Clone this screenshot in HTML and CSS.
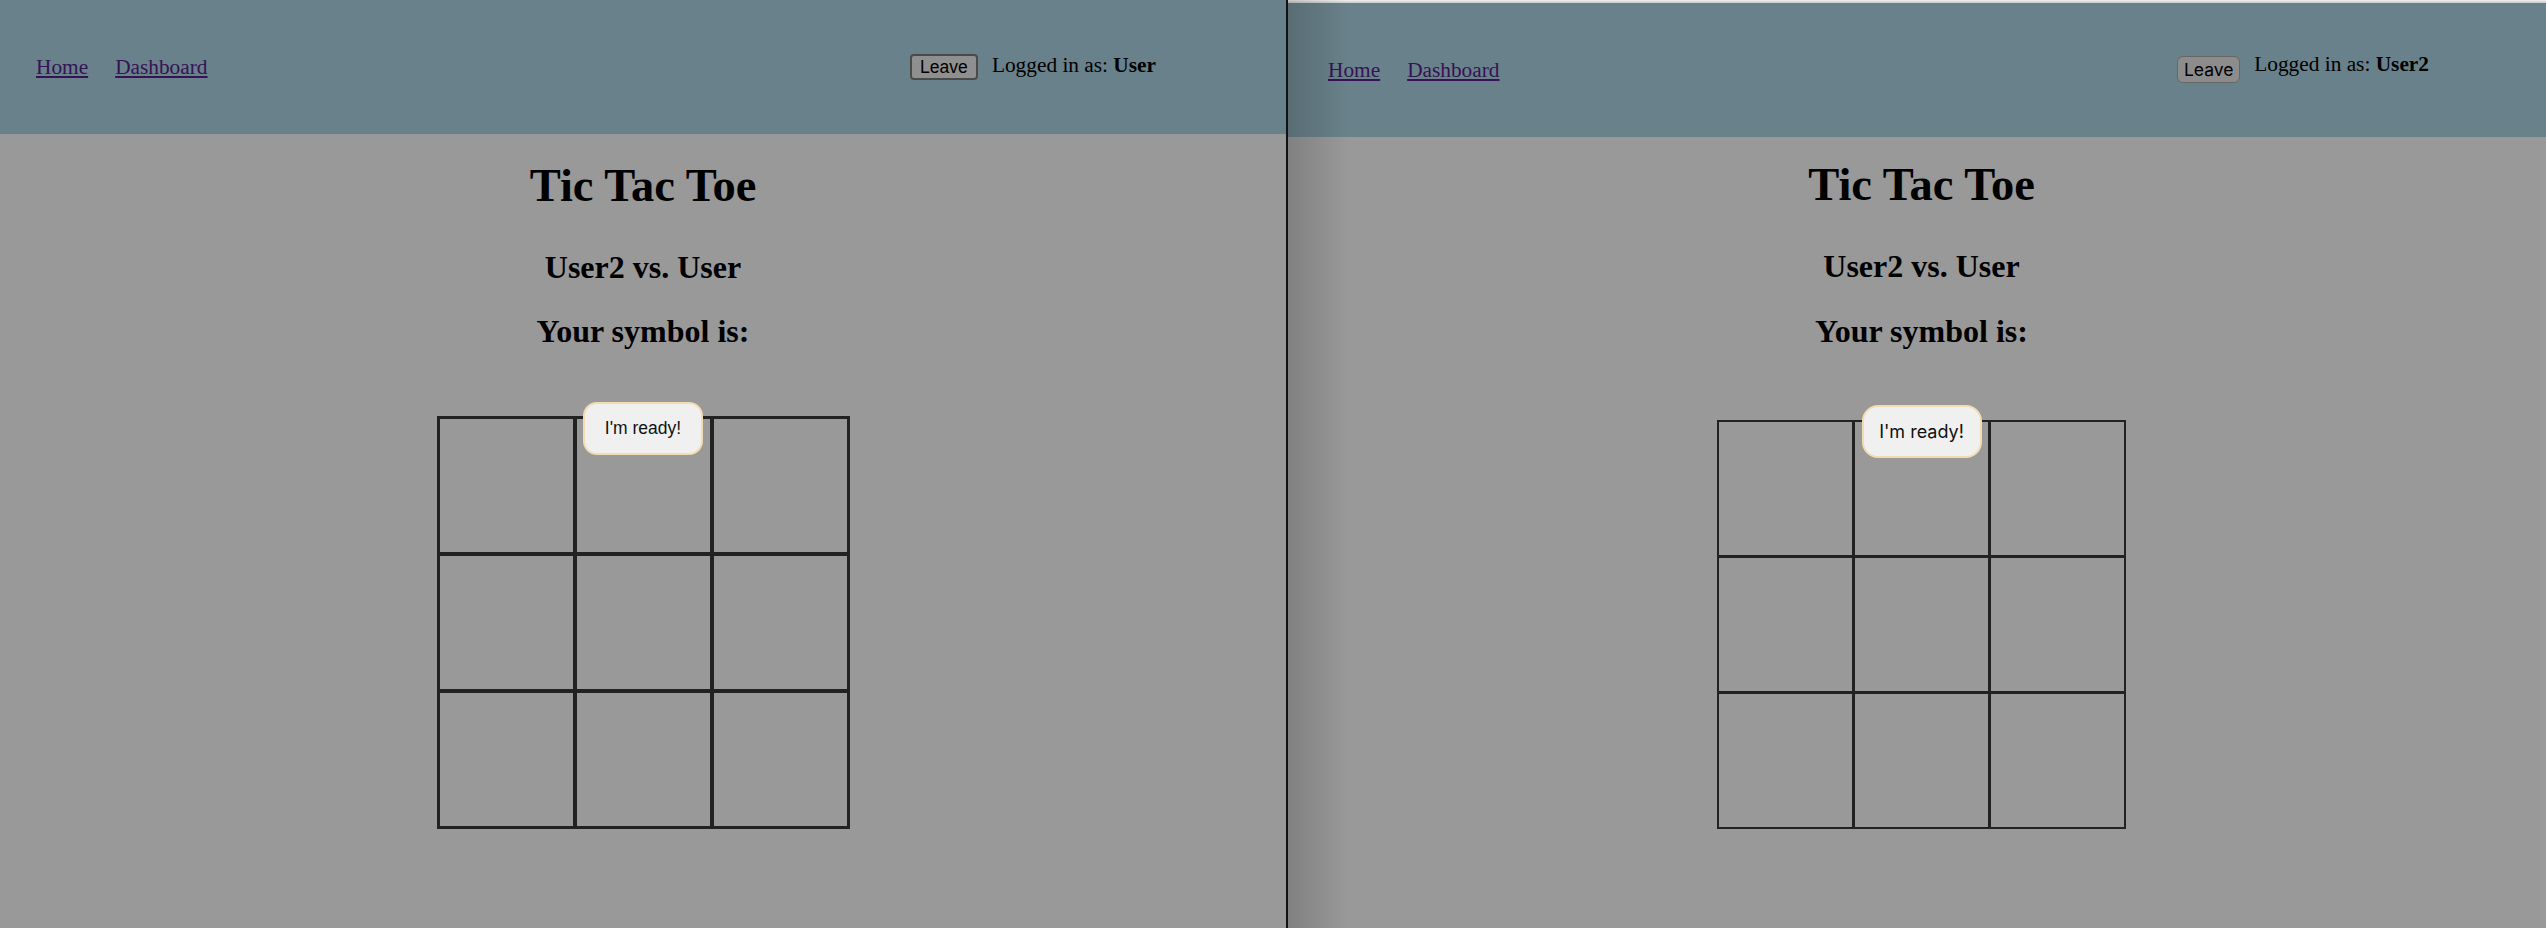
FILE: index.html
```html
<!DOCTYPE html>
<html lang="en">
<head>
<meta charset="utf-8">
<title>Tic Tac Toe</title>
<link rel="stylesheet" href="styles.css">
</head>
<body>
<div class="screen">
  <section class="win win-a">
    <header class="topbar">
      <nav class="nav"><a href="#">Home</a><a href="#">Dashboard</a></nav>
      <div class="user"><button class="leave">Leave</button><span class="who">Logged in as: <b>User</b></span></div>
    </header>
    <main class="game">
      <h1>Tic Tac Toe</h1>
      <h2 class="vs">User2 vs. User</h2>
      <h2 class="symbol">Your symbol is:</h2>
      <div class="board-wrap">
        <div class="board">
          <div class="cell"></div><div class="cell"></div><div class="cell"></div>
          <div class="cell"></div><div class="cell"></div><div class="cell"></div>
          <div class="cell"></div><div class="cell"></div><div class="cell"></div>
        </div>
        <button class="ready">I'm ready!</button>
      </div>
    </main>
  </section>
  <div class="divider"></div>
  <section class="win win-b">
    <div class="strip"></div>
    <header class="topbar">
      <nav class="nav"><a href="#">Home</a><a href="#">Dashboard</a></nav>
      <div class="user"><button class="leave">Leave</button><span class="who">Logged in as: <b>User2</b></span></div>
    </header>
    <main class="game">
      <h1>Tic Tac Toe</h1>
      <h2 class="vs">User2 vs. User</h2>
      <h2 class="symbol">Your symbol is:</h2>
      <div class="board-wrap">
        <div class="board">
          <div class="cell"></div><div class="cell"></div><div class="cell"></div>
          <div class="cell"></div><div class="cell"></div><div class="cell"></div>
          <div class="cell"></div><div class="cell"></div><div class="cell"></div>
        </div>
        <button class="ready">I'm ready!</button>
      </div>
    </main>
  </section>
</div>
</body>
</html>
```
FILE: styles.css
```css
html, body {
  margin: 0;
  padding: 0;
  background: #999999;
}
body {
  font-family: "Liberation Serif", "Times New Roman", serif;
  color: #000;
}
.screen {
  display: flex;
  width: 2546px;
  height: 928px;
  overflow: hidden;
}
.win {
  position: relative;
  background: #999999;
  display: flex;
  flex-direction: column;
}
.win-a {
  width: 1286px;
  flex: none;
}
.divider {
  width: 2px;
  flex: none;
  background: #111;
}
.win-b {
  flex: 1;
}
.win-b::after {
  content: "";
  position: absolute;
  top: 0;
  bottom: 0;
  left: 0;
  width: 60px;
  background: linear-gradient(to right, rgba(0,0,0,0.16), rgba(0,0,0,0));
  pointer-events: none;
}
.strip {
  height: 3px;
  background: linear-gradient(#f2f2f2, #c8c8c8);
}
.topbar {
  height: 134px;
  flex: none;
  background: #69818a;
  display: flex;
  align-items: center;
  font-size: 21.33px;
}
.nav {
  display: flex;
  gap: 27px;
  padding-left: 36px;
}
.nav a {
  color: #361256;
}
.user {
  margin-left: auto;
  margin-right: 130px;
  display: flex;
  align-items: center;
  gap: 14px;
}
.leave {
  width: 68px;
  height: 26px;
  box-sizing: border-box;
  padding: 0;
  font: 17.5px "Liberation Sans", Arial, sans-serif;
  color: #000;
  background: #8f8f8f;
  border: 2px solid #4a4a4a;
  border-radius: 4px;
}
.who {
  margin-bottom: 4px;
}
.game {
  display: flex;
  flex-direction: column;
  align-items: center;
}
.game h1 {
  font-size: 46.5px;
  line-height: 50px;
  margin: 26.5px 0 0;
}
.game h2 {
  font-size: 32px;
  line-height: 37px;
  margin: 0;
}
.game .vs {
  margin-top: 38.5px;
}
.game .symbol {
  margin-top: 27px;
}
.board-wrap {
  position: relative;
  margin-top: 65.5px;
}
.board {
  display: grid;
  grid-template-columns: repeat(3, 133px);
  grid-auto-rows: 133px;
  gap: 4px;
  padding: 3px;
  background: #222;
}
.cell {
  background: #999999;
}
.ready {
  position: absolute;
  top: -14px;
  left: 50%;
  transform: translateX(-50%);
  width: 120px;
  height: 53px;
  box-sizing: border-box;
  padding: 0;
  border: 2px solid #f3dcb0;
  border-radius: 14px;
  background: #f0f0f0;
  color: #111;
  font: 17.5px "Liberation Sans", Arial, sans-serif;
}

/* second window (other browser) */
.win-b .nav {
  padding-left: 40px;
}
.win-b .user {
  margin-right: 117px;
}
.win-b .leave {
  width: 63px;
  height: 27px;
  font: 17.5px Inter, "Liberation Sans", sans-serif;
  background: #8c8c8c;
  border: 1px solid #666;
  border-radius: 6px;
}
.win-b .who {
  margin-bottom: 10.4px;
}
.win-b .game {
  padding-left: 9px;
}
.win-b .game h1 {
  margin-top: 22.5px;
}
.win-b .game .vs {
  margin-top: 38.5px;
}
.win-b .game .symbol {
  margin-top: 28px;
}
.win-b .board-wrap {
  margin-top: 69.5px;
}
.win-b .board {
  gap: 3px;
  padding: 2px;
}
.win-b .ready {
  top: -15px;
  border-radius: 16px;
  font: 18px Inter, "Liberation Sans", sans-serif;
}
```
